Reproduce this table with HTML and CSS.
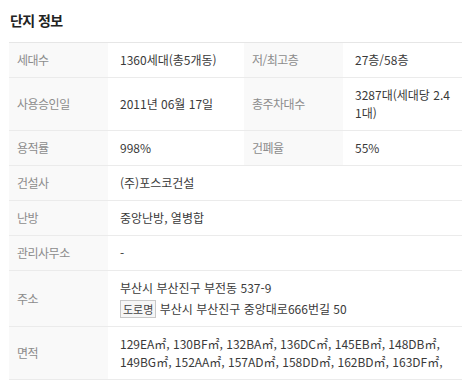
FILE: index.html
```html
<!DOCTYPE html>
<html lang="ko">
<head>
<meta charset="utf-8">
<title>단지 정보</title>
<link rel="stylesheet" href="styles.css">
</head>
<body>
<div class="wrap">
  <h2 class="title">단지 정보</h2>
  <table class="info">
    <colgroup>
      <col class="c-label">
      <col class="c-val1">
      <col class="c-label">
      <col class="c-val2">
    </colgroup>
    <tbody>
      <tr>
        <th>세대수</th>
        <td>1360세대(총5개동)</td>
        <th>저/최고층</th>
        <td>27층/58층</td>
      </tr>
      <tr>
        <th>사용승인일</th>
        <td>2011년 06월 17일</td>
        <th>총주차대수</th>
        <td class="wrapword">3287대(세대당 2.41대)</td>
      </tr>
      <tr>
        <th>용적률</th>
        <td>998%</td>
        <th>건폐율</th>
        <td>55%</td>
      </tr>
      <tr>
        <th>건설사</th>
        <td colspan="3">(주)포스코건설</td>
      </tr>
      <tr>
        <th>난방</th>
        <td colspan="3">중앙난방, 열병합</td>
      </tr>
      <tr>
        <th>관리사무소</th>
        <td colspan="3">-</td>
      </tr>
      <tr>
        <th>주소</th>
        <td colspan="3" class="addr">
          <div>부산시 부산진구 부전동 537-9</div>
          <div class="road"><span class="tag">도로명</span> 부산시 부산진구 중앙대로666번길 50</div>
        </td>
      </tr>
      <tr>
        <th>면적</th>
        <td colspan="3">129EA㎡, 130BF㎡, 132BA㎡, 136DC㎡, 145EB㎡, 148DB㎡, 149BG㎡, 152AA㎡, 157AD㎡, 158DD㎡, 162BD㎡, 163DF㎡,</td>
      </tr>
    </tbody>
  </table>
</div>
</body>
</html>
```
FILE: styles.css
```css
* { box-sizing: border-box; }
html, body { margin: 0; padding: 0; background: #fff; }
body {
  font-family: "Noto Sans CJK KR", "Noto Sans", sans-serif;
  color: #333;
}
.wrap {
  padding: 10px 12px 0 9px;
}
.title {
  margin: 0 0 12px 1px;
  font-size: 14px;
  line-height: 20px;
  font-weight: 700;
  color: #222;
  letter-spacing: -0.6px;
}
.info {
  width: 453px;
  border-collapse: collapse;
  table-layout: fixed;
  border-top: 1px solid #e6e6e6;
  font-size: 12px;
  line-height: 18px;
}
.c-label { width: 99px; }
.c-val1 { width: 136px; }
.c-val2 { width: 119px; }
.info th, .info td {
  border-bottom: 1px solid #ebebeb;
  padding: 8px 8px 8px 12px;
  vertical-align: middle;
  text-align: left;
}
.info th {
  background: #f9f9f9;
  font-weight: 400;
  color: #8c8c8c;
  padding-left: 8px;
  letter-spacing: -0.5px;
}
.info td { color: #3a3a3a; letter-spacing: 0; }
.wrapword { word-break: break-all; }
.addr { padding-top: 9px; padding-bottom: 9px; }
.road { margin-top: 3px; }
.tag {
  display: inline-block;
  border: 1px solid #c8c8c8;
  background: #f6f6f6;
  color: #444;
  font-size: 11px;
  line-height: 16px;
  padding: 0 2px;
  letter-spacing: 0;
}
```
